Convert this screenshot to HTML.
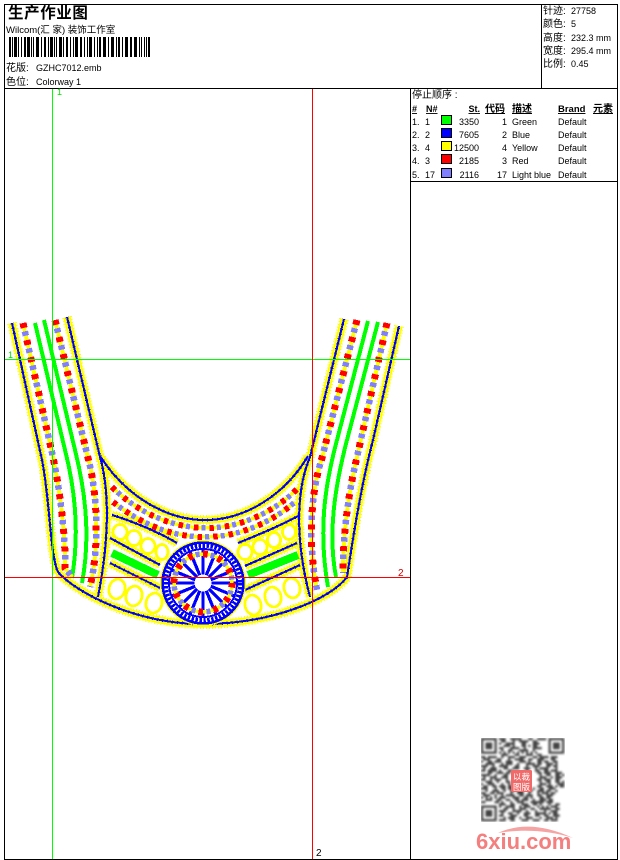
<!DOCTYPE html>
<html>
<head>
<meta charset="utf-8">
<style>
html,body{margin:0;padding:0;background:#fff;width:620px;height:860px;overflow:hidden}
svg{display:block}
text{font-family:"Liberation Sans","Noto Sans CJK SC",sans-serif;font-size:9px;fill:#000}
.u{font-weight:bold;text-decoration:underline}
</style>
</head>
<body>
<svg width="620" height="860" viewBox="0 0 620 860" xmlns="http://www.w3.org/2000/svg">
<defs>
<g id="lines" fill="none" stroke-linejoin="round">
<path d="M12,323L42,460C50,500 50,555 58,572C75,592 135,624 203,624C270,624 330,600 347,577C352,545 360,490 373,440L399,326"/>
<path d="M67,317L100,457C108,485 111,530 98,597"/>
<path d="M344,319L310,457C296,490 295,540 310,597"/>
<path d="M100,456C125,495 165,520 205,520C245,520 285,495 308,456"/>
<path d="M112,515C135,522 160,533 177,543"/>
<path d="M300,515C280,526 258,535 238,543"/>
<path d="M110,538L160,565"/>
<path d="M110,563L160,588"/>
<path d="M297,543L245,566"/>
<path d="M300,565L245,590"/>
</g>
<path id="s1" d="M23,323L53,457C60,490 66,540 65,568L72,577"/>
<path id="s2" d="M55,320L88,458C97,490 100,545 90,587"/>
<path id="s3" d="M357,320L322,458C310,495 308,545 317,590"/>
<path id="s4" d="M387,323L357,457C348,495 343,535 343,573"/>
<path id="a1" d="M112,487C140,515 175,528 207,528C240,528 275,512 298,488"/>
<path id="a2" d="M113,502C140,523 170,537 205,537C240,537 272,522 295,502"/>
<clipPath id="qc"><rect x="481" y="738" width="84" height="84"/></clipPath>
<filter id="soft" x="-5%" y="-5%" width="110%" height="110%"><feGaussianBlur stdDeviation=".45"/></filter>
</defs>

<!-- frame -->
<g fill="#000">
<rect x="4" y="4" width="614" height="1"/>
<rect x="4" y="4" width="1" height="856"/>
<rect x="617" y="4" width="1" height="856"/>
<rect x="4" y="859" width="614" height="1"/>
<rect x="4" y="88" width="614" height="1"/>
<rect x="541" y="4" width="1" height="85"/>
<rect x="410" y="88" width="1" height="772"/>
<rect x="410" y="181" width="208" height="1"/>
</g>

<!-- header -->
<text x="8" y="18" style="font-size:15.500px;font-weight:bold;letter-spacing:.6px">生产作业图</text>
<text x="6" y="33" style="font-size:9.500px">Wilcom(汇 家) 装饰工作室</text>
<path fill="#000" d="M9 37h2v20h-2zM12 37h1v20h-1zM14 37h3v20h-3zM18 37h1v20h-1zM21 37h1v20h-1zM24 37h2v20h-2zM27 37h3v20h-3zM31 37h1v20h-1zM33 37h1v20h-1zM36 37h3v20h-3zM41 37h1v20h-1zM44 37h2v20h-2zM48 37h1v20h-1zM50 37h3v20h-3zM54 37h1v20h-1zM56 37h1v20h-1zM59 37h3v20h-3zM63 37h1v20h-1zM66 37h2v20h-2zM70 37h1v20h-1zM73 37h1v20h-1zM75 37h3v20h-3zM80 37h2v20h-2zM84 37h1v20h-1zM87 37h1v20h-1zM89 37h3v20h-3zM94 37h1v20h-1zM97 37h1v20h-1zM99 37h2v20h-2zM103 37h3v20h-3zM108 37h1v20h-1zM111 37h3v20h-3zM116 37h1v20h-1zM118 37h2v20h-2zM122 37h1v20h-1zM125 37h3v20h-3zM130 37h2v20h-2zM134 37h3v20h-3zM139 37h1v20h-1zM141 37h1v20h-1zM144 37h1v20h-1zM146 37h1v20h-1zM148 37h2v20h-2z"/>
<text x="6" y="71" style="font-size:10px">花版:</text>
<text x="36" y="71">GZHC7012.emb</text>
<text x="6" y="85" style="font-size:10px">色位:</text>
<text x="36" y="85">Colorway 1</text>

<!-- info -->
<text x="543" y="14" style="font-size:10px">针迹:</text><text x="571" y="14">27758</text>
<text x="543" y="27" style="font-size:10px">颜色:</text><text x="571" y="27">5</text>
<text x="543" y="41" style="font-size:10px">高度:</text><text x="571" y="41">232.3 mm</text>
<text x="543" y="54" style="font-size:10px">宽度:</text><text x="571" y="54">295.4 mm</text>
<text x="543" y="67" style="font-size:10px">比例:</text><text x="571" y="67">0.45</text>

<!-- table -->
<text x="412" y="98" style="font-size:10px">停止顺序 :</text>
<text x="412" y="112" class="u">#</text>
<text x="426" y="112" class="u">N#</text>
<text x="480" y="112" class="u" text-anchor="end">St.</text>
<text x="485" y="112" class="u" style="font-size:10px">代码</text>
<text x="512" y="112" class="u" style="font-size:10px">描述</text>
<text x="558" y="112" class="u" style="font-size:9.500px">Brand</text>
<text x="593" y="112" class="u" style="font-size:10px">元素</text>

<g>
<text x="412" y="125">1.</text><text x="425" y="125">1</text><text x="479" y="125" text-anchor="end">3350</text><text x="507" y="125" text-anchor="end">1</text><text x="512" y="125">Green</text><text x="558" y="125">Default</text>
<text x="412" y="138">2.</text><text x="425" y="138">2</text><text x="479" y="138" text-anchor="end">7605</text><text x="507" y="138" text-anchor="end">2</text><text x="512" y="138">Blue</text><text x="558" y="138">Default</text>
<text x="412" y="151">3.</text><text x="425" y="151">4</text><text x="479" y="151" text-anchor="end">12500</text><text x="507" y="151" text-anchor="end">4</text><text x="512" y="151">Yellow</text><text x="558" y="151">Default</text>
<text x="412" y="164">4.</text><text x="425" y="164">3</text><text x="479" y="164" text-anchor="end">2185</text><text x="507" y="164" text-anchor="end">3</text><text x="512" y="164">Red</text><text x="558" y="164">Default</text>
<text x="412" y="178">5.</text><text x="425" y="178">17</text><text x="479" y="178" text-anchor="end">2116</text><text x="507" y="178" text-anchor="end">17</text><text x="512" y="178">Light blue</text><text x="558" y="178">Default</text>
</g>
<g stroke="#000" stroke-width="1" shape-rendering="crispEdges">
<rect x="441.500" y="115.500" width="10" height="9" fill="#00ff00"/>
<rect x="441.500" y="128.500" width="10" height="9" fill="#0000ff"/>
<rect x="441.500" y="141.500" width="10" height="9" fill="#ffff00"/>
<rect x="441.500" y="154.500" width="10" height="9" fill="#ff0000"/>
<rect x="441.500" y="168.500" width="10" height="9" fill="#8080ff"/>
</g>

<!-- embroidery -->
<g shape-rendering="crispEdges" fill="none">
  <!-- halo -->
  <use href="#lines" stroke="#ffff00" stroke-width="7"/>
  <use href="#lines" stroke="#ffff00" stroke-width="10" stroke-dasharray="1 2"/>

  <!-- green stripes -->
  <g stroke="#00ff00" stroke-width="4" stroke-linejoin="round">
    <path d="M35,323L65,450C74,485 80,530 72,578"/>
    <path d="M44,320L75,450C85,490 91,535 82,583"/>
    <path d="M368,321L337,440C325,485 318,530 328,587"/>
    <path d="M378,322L347,440C334,490 328,535 336,577"/>
  </g>
  <path d="M112,553L158,575" stroke="#00ff00" stroke-width="8"/>
  <path d="M298,555L248,575" stroke="#00ff00" stroke-width="8"/>

  <!-- beaded stripes -->
  <g stroke="#ffff00" stroke-width="4">
    <use href="#s1"/><use href="#s2"/><use href="#s3"/><use href="#s4"/>
    <use href="#a1" stroke-width="3.500"/><use href="#a2" stroke-width="3.500"/>
  </g>
  <g stroke="#ff0000" stroke-width="7" stroke-dasharray="5 12.500">
    <use href="#s1"/><use href="#s2"/><use href="#s3"/><use href="#s4"/>
  </g>
  <g stroke="#8080ff" stroke-width="6.500" stroke-dasharray="4.500 13" stroke-dashoffset="9">
    <use href="#s1"/><use href="#s2"/><use href="#s3"/><use href="#s4"/>
  </g>
  <g stroke="#ff0000" stroke-width="6" stroke-dasharray="4.500 11">
    <use href="#a1"/><use href="#a2"/>
  </g>
  <g stroke="#8080ff" stroke-width="5.500" stroke-dasharray="4 11.500" stroke-dashoffset="8">
    <use href="#a1"/><use href="#a2"/>
  </g>

  <!-- ellipses -->
  <g stroke="#ffff00" stroke-width="2.800">
    <ellipse cx="120" cy="532" rx="7" ry="7.500"/>
    <ellipse cx="134" cy="538" rx="7" ry="7.500"/>
    <ellipse cx="148" cy="546" rx="7" ry="7.500"/>
    <ellipse cx="162" cy="552" rx="6" ry="7.500"/>
    <ellipse cx="117" cy="589" rx="8" ry="10" transform="rotate(15 117 589)"/>
    <ellipse cx="134" cy="596" rx="8" ry="10" transform="rotate(15 134 596)"/>
    <ellipse cx="154" cy="603" rx="8" ry="10" transform="rotate(15 154 603)"/>
    <ellipse cx="245" cy="552" rx="7" ry="7.500"/>
    <ellipse cx="260" cy="547" rx="7" ry="7.500"/>
    <ellipse cx="274" cy="540" rx="6.500" ry="7.500"/>
    <ellipse cx="289" cy="532" rx="6.500" ry="7.500"/>
    <ellipse cx="292" cy="588" rx="8" ry="10" transform="rotate(-15 292 588)"/>
    <ellipse cx="273" cy="597" rx="8" ry="10" transform="rotate(-15 273 597)"/>
    <ellipse cx="253" cy="605" rx="8" ry="10" transform="rotate(-15 253 605)"/>
  </g>

  <!-- blue lines -->
  <use href="#lines" stroke="#0000ff" stroke-width="2"/>
  <use href="#lines" stroke="#0000ff" stroke-width="3" stroke-dasharray="1 4"/>

  <!-- medallion -->
  <circle cx="203" cy="583" r="41" fill="#fff" stroke="#ffff00" stroke-width="4"/>
  <path stroke="#0000ff" stroke-width="3.200" d="M211,583H237M195,583H169M203,575V549M203,591V617M210.400,586.100L234.400,596M195.600,579.900L171.600,570M210.400,579.900L234.400,570M195.600,586.100L171.600,596M208.700,588.700L227,607M197.300,577.300L179,559M208.700,577.300L227,559M197.300,588.700L179,607M206.100,590.400L216,614.400M199.900,575.600L190,551.600M206.100,575.600L216,551.600M199.900,590.400L190,614.400"/>
  <circle cx="203" cy="583" r="29" stroke="#ffff00" stroke-width="3.500"/>
  <circle cx="203" cy="583" r="29" stroke="#ff0000" stroke-width="7" stroke-dasharray="4.500 10.680"/>
  <circle cx="203" cy="583" r="29" stroke="#8080ff" stroke-width="5.500" stroke-dasharray="4 11.180" stroke-dashoffset="7.600"/>
  <circle cx="203" cy="583" r="34" stroke="#0000ff" stroke-width="2"/>
  <circle cx="203" cy="583" r="37.500" stroke="#0000ff" stroke-width="4.500" stroke-dasharray="2.500 1.500"/>
  <circle cx="203" cy="583" r="40.500" stroke="#0000ff" stroke-width="2.500"/>
  <circle cx="203" cy="583" r="8.500" fill="#fff"/>
</g>

<!-- guides -->
<g shape-rendering="crispEdges">
<rect x="52" y="89" width="1" height="770" fill="#00ff00"/>
<rect x="5" y="359" width="405" height="1" fill="#00ff00"/>
<rect x="312" y="89" width="1" height="770" fill="#ff0000"/>
<rect x="5" y="577" width="405" height="1" fill="#ff0000"/>
</g>
<text x="57" y="95" style="fill:#00e000;font-size:9px">1</text>
<text x="8" y="358" style="fill:#00e000;font-size:9px">1</text>
<text x="398" y="576" style="fill:#d00000;font-size:10px">2</text>
<text x="316" y="856" style="fill:#000;font-size:10px">2</text>

<!-- QR -->
<g clip-path="url(#qc)">
<g transform="translate(481,738) scale(2.250)" opacity=".85" filter="url(#soft)">
<path fill="#222" fill-rule="evenodd" d="M0 0h7v7h-7zM1 1v5h5v-5zM2 2h3v3h-3zM30 0h7v7h-7zM31 1v5h5v-5zM32 2h3v3h-3zM0 30h7v7h-7zM1 31v5h5v-5zM2 32h3v3h-3z"/>
<path fill="none" stroke="#222" stroke-width="1.050" d="M8 .5h3m2 0h5m3 0h2m2 0h4
M9 1.500h2m3 0h1m2 0h4m2 0h2
M8 2.500h1m2 0h4m3 0h2m3 0h3
M10 3.500h3m1 0h1m3 0h2m1 0h1m1 0h2
M8 4.500h2m3 0h4m2 0h1m3 0h4
M9 5.500h1m2 0h2m3 0h4m2 0h1
M8 6.500h1m1 0h1m1 0h1m1 0h1m1 0h1m1 0h1m1 0h1m1 0h1m1 0h1
M9 7.500h3m3 0h2m3 0h3m2 0h2
M0 8.500h2m1 0h4m2 0h1m2 0h3m2 0h3m3 0h2m1 0h4m1 0h3
M1 9.500h3m3 0h2m3 0h1m2 0h4m2 0h2m2 0h3m3 0h2
M0 10.500h1m2 0h2m1 0h3m2 0h3m3 0h3m1 0h1m3 0h2m1 0h2m2 0h2
M2 11.500h4m3 0h1m1 0h3m2 0h1m3 0h4m1 0h2m2 0h3m1 0h1
M0 12.500h3m2 0h1m2 0h4m3 0h2m3 0h1m2 0h3m3 0h2m1 0h2
M1 13.500h1m2 0h3m3 0h2m2 0h3m2 0h3m2 0h1m1 0h4m3 0h1
M0 14.500h2m1 0h4m1 0h1m3 0h2m6 0h1m3 0h2m2 0h2m1 0h3
M3 15.500h2m2 0h3m1 0h2m12 0h2m1 0h3m2 0h3
M0 16.500h4m2 0h1m3 0h2m14 0h1m2 0h2m2 0h2m1 0h1
M1 17.500h1m2 0h3m2 0h3m14 0h3m2 0h1m1 0h3
M0 18.500h2m2 0h1m1 0h3m2 0h1m13 0h2m1 0h3m2 0h2
M2 19.500h3m2 0h1m3 0h2m13 0h1m2 0h2m2 0h2m1 0h1
M0 20.500h1m2 0h3m3 0h1m2 0h1m13 0h3m1 0h1m3 0h3
M1 21.500h2m2 0h2m1 0h3m1 0h2m11 0h2m2 0h3m1 0h1m1 0h2
M0 22.500h3m3 0h1m2 0h2m1 0h3m3 0h4m1 0h1m2 0h2m2 0h3
M2 23.500h1m2 0h3m2 0h1m2 0h2m1 0h3m2 0h2m2 0h3m1 0h2m2 0h1
M0 24.500h2m2 0h2m1 0h3m3 0h1m2 0h3m2 0h1m3 0h1m1 0h3m1 0h2
M1 25.500h3m2 0h1m2 0h1m1 0h4m2 0h2m1 0h3m2 0h2m2 0h3
M0 26.500h1m1 0h1m1 0h1m1 0h1m1 0h3m3 0h3m2 0h2m1 0h1m3 0h2m1 0h2
M2 27.500h3m2 0h2m2 0h2m2 0h2m1 0h3m2 0h1m2 0h3m1 0h2
M0 28.500h2m4 0h2m1 0h1m3 0h1m2 0h3m3 0h6m1 0h3
M8 29.500h3m2 0h2m3 0h3m2 0h2m1 0h1m3 0h1m2 0h2
M8 30.500h1m2 0h4m2 0h1m1 0h3m3 0h1m1 0h1m1 0h1m1 0h3
M10 31.500h2m2 0h1m2 0h3m2 0h2m2 0h5m2 0h2
M8 32.500h3m3 0h4m2 0h1m3 0h1m3 0h1m2 0h3
M9 33.500h1m2 0h2m2 0h1m2 0h3m2 0h5m1 0h1m1 0h2
M8 34.500h2m3 0h3m3 0h2m3 0h2m2 0h2m2 0h3
M10 35.500h1m1 0h3m2 0h1m2 0h3m3 0h1m2 0h3m1 0h1
M8 36.500h3m2 0h2m3 0h3m2 0h3m2 0h2m1 0h3"/>
</g>
</g>
<!-- seal -->
<rect x="511" y="770" width="21" height="22" rx="1.500" fill="#f06a6a"/>
<text x="513" y="780" style="font-size:8.500px;fill:#fff">以裁</text>
<text x="513" y="790" style="font-size:8.500px;fill:#fff">图版</text>

<!-- logo -->
<path d="M498,833C520,823 545,825 573,838C548,830 522,829 498,833Z" fill="#f6a3a3"/>
<text x="476" y="849" style="font-size:22px;font-weight:bold;fill:#f47f7f">6xiu.com</text>
</svg>
</body>
</html>
